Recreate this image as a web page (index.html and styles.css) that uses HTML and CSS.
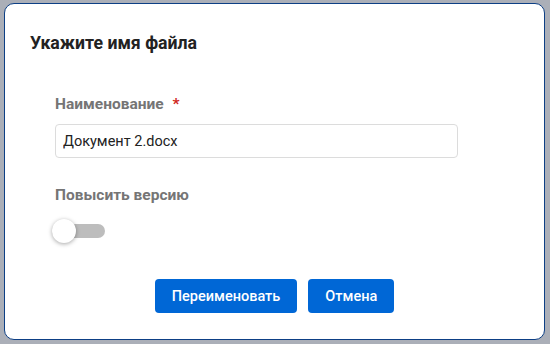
FILE: index.html
```html
<!DOCTYPE html>
<html lang="ru">
<head>
  <meta charset="UTF-8">
  <meta name="viewport" content="width=device-width, initial-scale=1.0">
  <title>Переименовать</title>
  <link rel="stylesheet" href="styles.css">
</head>
<body>
<div class="dialog">
  <h2 class="dialog-title">Укажите имя файла</h2>
  <div class="form">
    <label class="field-label" for="fileName">Наименование <span class="required">*</span></label>
    <input id="fileName" class="text-input" type="text" value="Документ 2.docx">

    <div class="field-label version-label">Повысить версию</div>
    <div class="toggle">
      <span class="toggle-track"></span>
      <span class="toggle-knob"></span>
    </div>
  </div>
  <div class="actions">
    <button class="btn">Переименовать</button>
    <button class="btn">Отмена</button>
  </div>
</div>
</body>
</html>
```

FILE: styles.css
```css
body {
  margin: 0;
  padding: 0;
  background-color: #abafb8;
  font-family: Roboto, "Liberation Sans", sans-serif;
  color: #222;
}

.dialog {
  box-sizing: border-box;
  width: 541px;
  height: 337px;
  margin: 3px 0 0 4px;
  background-color: #fff;
  border: 1px solid #0d3f85;
  border-radius: 10px;
  padding: 29px 0 0 0;
}

.dialog-title {
  margin: 0 0 0 25px;
  font-size: 17.7px;
  line-height: 20px;
  font-weight: 700;
  color: #222;
}

.form {
  padding: 41px 0 0 50px;
}

.field-label {
  display: block;
  font-size: 15.5px;
  line-height: 20px;
  font-weight: 700;
  color: #757575;
}

.required {
  color: #d0281e;
  margin-left: 5px;
}

.text-input {
  box-sizing: border-box;
  display: block;
  width: 403px;
  height: 34px;
  margin-top: 10px;
  padding: 0 7px;
  border: 1px solid #dcdcdc;
  border-radius: 4px;
  font-family: Roboto, "Liberation Sans", sans-serif;
  font-size: 14.5px;
  color: #222;
  outline: none;
}

.version-label {
  margin-top: 27px;
}

.toggle {
  position: relative;
  width: 54px;
  height: 24px;
  margin-top: 14px;
  margin-left: -3px;
  display: flex;
  align-items: center;
}

.toggle-track {
  display: block;
  width: 53px;
  height: 14px;
  border-radius: 7px;
  background-color: #bdbdbd;
}

.toggle-knob {
  position: absolute;
  left: 0;
  top: 0;
  width: 24px;
  height: 24px;
  border-radius: 50%;
  background-color: #fff;
  box-shadow: 0 1px 4px rgba(0, 0, 0, 0.35);
}

.actions {
  display: flex;
  justify-content: center;
  gap: 11px;
  margin-top: 36px;
}

.btn {
  height: 34px;
  padding: 0 17px;
  border: none;
  border-radius: 4px;
  background-color: #0067d6;
  color: #fff;
  font-family: Roboto, "Liberation Sans", sans-serif;
  font-size: 14.5px;
  font-weight: 500;
  cursor: pointer;
}
```
